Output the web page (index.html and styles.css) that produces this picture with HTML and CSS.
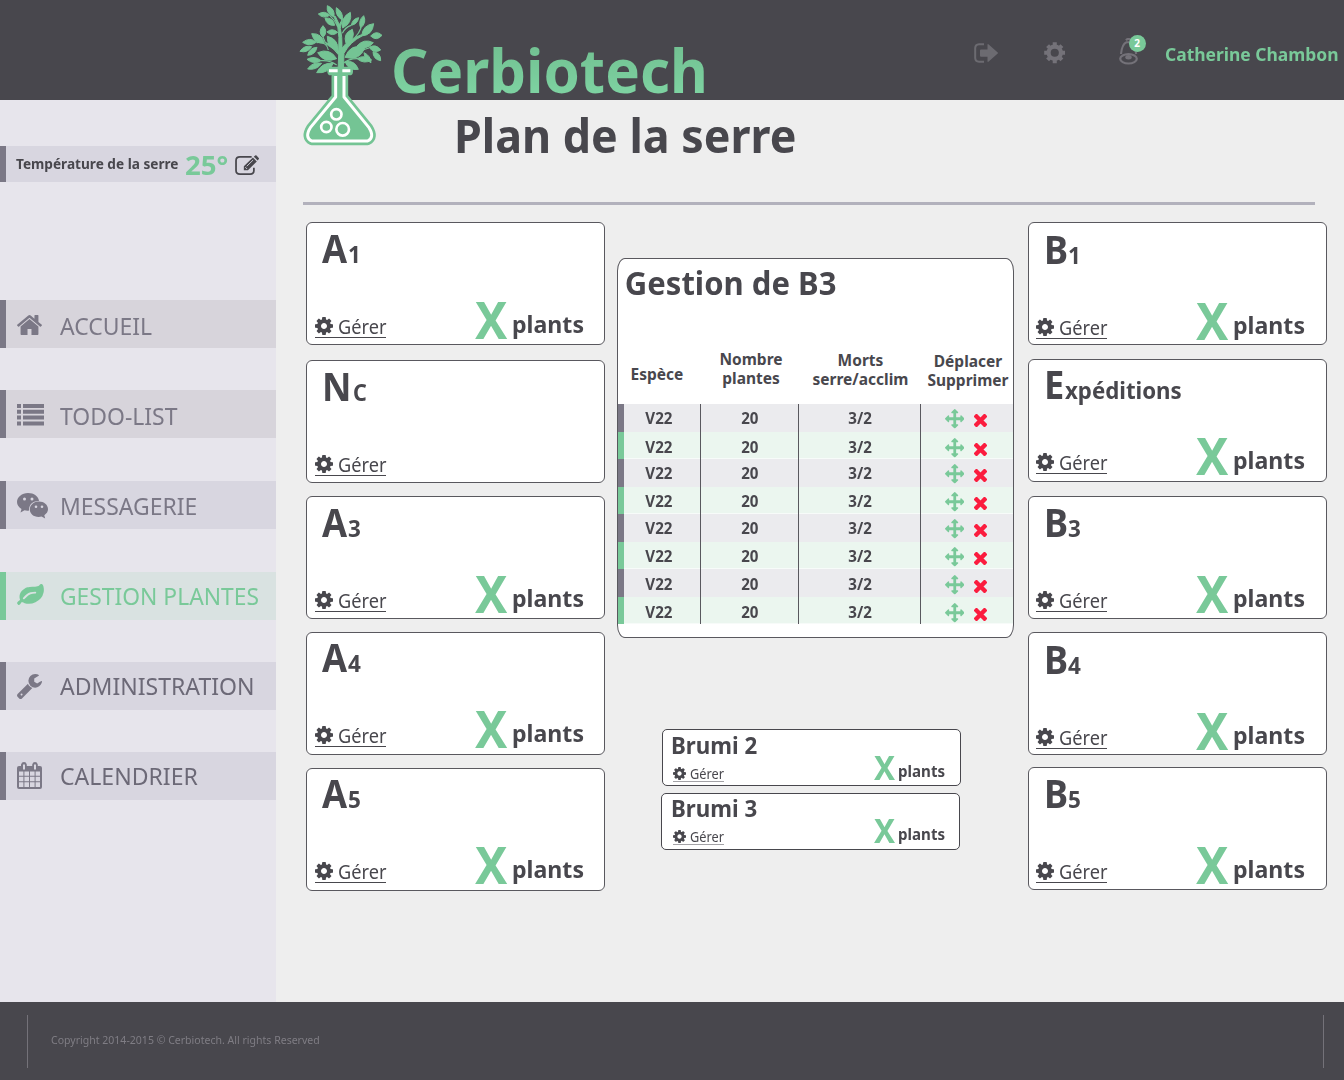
FILE: index.html
```html
<!DOCTYPE html>
<html lang="fr">
<head>
<meta charset="utf-8">
<title>Cerbiotech - Plan de la serre</title>
<link rel="stylesheet" href="styles.css">
</head>
<body>
<svg class="defs" aria-hidden="true">
  <symbol id="cog" viewBox="128 128 1536 1536"><path d="M1152 896q0-106-75-181t-181-75-181 75-75 181 75 181 181 75 181-75 75-181zm512-109v222q0 12-8 23t-20 13l-185 28q-19 54-39 91 35 50 107 138 10 12 10 25t-9 23q-27 37-99 108t-94 71q-12 0-26-9l-138-108q-44 23-91 38-16 136-29 186-7 28-36 28h-222q-14 0-24.500-8.500t-11.500-21.500l-28-184q-49-16-90-37l-141 107q-10 9-25 9-14 0-25-11-126-114-165-168-7-10-7-23 0-12 8-23 15-21 51-66.500t54-70.500q-27-50-41-99l-183-27q-13-2-21-12.500t-8-23.500v-222q0-12 8-23t19-13l186-28q14-46 39-92-40-57-107-138-10-12-10-24 0-10 9-23 26-36 98.500-107.500t94.500-71.500q13 0 26 10l138 107q44-23 91-38 16-136 29-186 7-28 36-28h222q14 0 24.500 8.500t11.500 21.500l28 184q49 16 90 37l142-107q9-9 24-9 13 0 25 10 129 119 165 170 7 8 7 22 0 12-8 23-15 21-51 66.500t-54 70.500q26 50 41 98l183 28q13 2 21 12.500t8 23.500z"/></symbol>
  <symbol id="move" viewBox="0 0 1792 1792"><path d="M1792 896q0 26-19 45l-256 256q-19 19-45 19t-45-19-19-45v-128h-384v384h128q26 0 45 19t19 45-19 45l-256 256q-19 19-45 19t-45-19l-256-256q-19-19-19-45t19-45 45-19h128v-384h-384v128q0 26-19 45t-45 19-45-19l-256-256q-19-19-19-45t19-45l256-256q19-19 45-19t45 19 19 45v128h384v-384h-128q-26 0-45-19t-19-45 19-45l256-256q19-19 45-19t45 19l256 256q19 19 19 45t-19 45-45 19h-128v384h384v-128q0-26 19-45t45-19 45 19l256 256q19 19 19 45z"/></symbol>
  <symbol id="cross" viewBox="0 0 13 13"><path d="M2.500 2.500l8 8M10.500 2.500l-8 8" stroke="currentColor" stroke-width="4.400" stroke-linecap="square"/></symbol>
</svg>

<header class="topbar">
  <svg class="logo" viewBox="0 0 285 450" aria-hidden="true">
    <g class="leaf leaves">
      <path d="M97 17Q121 26 117 51Q93 42 97 17zM124 23Q146 36 142 60Q120 48 124 23zM70 42Q85 58 104 46Q89 30 70 42zM90 54Q115 52 119 76Q95 78 90 54zM166 37Q173 69 143 84Q137 51 166 37zM191 53Q188 72 169 76Q172 56 191 53zM206 47Q216 68 197 84Q188 62 206 47zM236 71Q233 105 200 108Q203 75 236 71zM261 106Q244 125 227 108Q244 89 261 106z"/>
      <path d="M84 77Q101 95 84 112Q67 95 84 77zM50 101Q81 99 88 130Q57 131 50 101zM96 96Q112 111 128 97Q112 82 96 96zM97 109Q131 117 129 152Q95 143 97 109zM172 88Q183 118 153 130Q143 100 172 88zM23 127Q44 142 65 126Q44 110 23 127zM15 154Q38 160 50 140Q28 134 15 154zM38 166Q61 165 66 142Q43 143 38 166z"/>
      <path d="M235 128Q215 152 186 138Q207 114 235 128zM257 150Q237 162 222 142Q243 130 257 150zM257 182Q258 158 234 155Q234 178 257 182zM210 142Q194 185 150 172Q166 129 210 142zM68 158Q88 192 125 176Q104 142 68 158zM36 178Q56 195 78 182Q58 165 36 178zM38 207Q65 212 80 190Q53 184 38 207zM65 218Q100 222 115 190Q80 186 65 218zM230 180Q207 194 186 176Q209 162 230 180zM190 208Q161 213 150 185Q179 179 190 208zM207 158Q227 167 228 188Q209 180 207 158z"/>
      <path d="M129 215L131 165Q118 145 93 132L94 128Q120 137 131 152Q134 110 128 78L117 50L121 49L133 74L142 58L136 85Q142 110 141 145Q158 118 200 104L201 108Q165 126 147 160L145 215z"/>
    </g>
    <path class="twig" d="M65 128Q95 124 100 150M78 182Q105 180 125 195M186 176Q160 176 145 190M222 144Q200 150 190 160M198 84Q192 100 180 112M104 46Q120 60 128 80M84 112L92 130M168 76Q150 82 142 100"/>
    <rect class="leaf" x="97" y="200" width="77" height="26" rx="11"/>
    <path class="glass-edge" d="M122 228V291L46 383Q28 412 50 423H218Q240 412 222 383L147 291V228z"/>
    <path class="glass" d="M122 228V291L46 383Q28 412 50 423H218Q240 412 222 383L147 291V228M102 212H128M142 212H166"/>
    <g class="bubbles"><circle cx="124" cy="343" r="15.500"/><circle cx="94" cy="381" r="15.500"/><circle cx="143" cy="388" r="19"/></g>
  </svg>
  <div class="brand">Cerbiotech</div>
  <nav class="tools">
    <svg class="t-exit" viewBox="0 0 24 20"><path d="M10 1.200H5A4 4 0 0 0 1.200 5V15A4 4 0 0 0 5 18.800H10" fill="none" stroke="currentColor" stroke-width="2"/><path d="M7 6.500q-1 0-1 1v5.200q0 1 1 1h6.500v4.300q0 1.500 1.200.6l9-8q.6-.6 0-1.200l-9-8q-1.200-.9-1.200.6v4.500z"/></svg>
    <svg class="t-cog" viewBox="-10.500 -10.500 21 21"><circle r="6" fill="none" stroke="currentColor" stroke-width="4"/><path d="M0-10.300V-7M0 10.300V7M-10.300 0H-7M10.300 0H7M-7-7L-5-5M7 7L5 5M7-7L5-5M-7 7L-5 5" stroke="currentColor" stroke-width="4"/></svg>
    <div class="bell">
      <svg viewBox="0 0 20 27"><g fill="none" stroke="currentColor"><ellipse cx="9.500" cy="20.800" rx="8.300" ry="4.700" stroke-width="2.200"/><path d="M2 16Q3 6 7.500 4.200H11Q16 6 17.200 16" stroke-width="2.100"/><path d="M7 2.300Q9.500-.5 12 2.300" stroke-width="2.200"/></g><ellipse cx="9.500" cy="19.300" rx="3.200" ry="2.200"/></svg>
      <span class="badge">2</span>
    </div>
    <div class="user">Catherine Chambon</div>
  </nav>
</header>

<div class="body">
  <aside class="side">
    <div class="temp">
      <span class="temp-label">Température de la serre</span>
      <span class="temp-value">25°</span>
      <svg class="edit" viewBox="0 0 25 21"><path d="M17 1.800H5Q1 1.800 1 5.600V15.800Q1 19.500 5 19.500H15.500Q19.300 19.500 19.300 15.800V13" fill="none" stroke="currentColor" stroke-width="1.800"/><path d="M9 15.700V11.400L18.300 2.600L22.300 6.600L13.200 15.700zM19.200 1.700L20.600.5Q21.300 0 22 .6L24.300 3Q24.900 3.700 24.200 4.400L23.100 5.600z"/><path d="M12 11.500L18.500 5.200M10.500 12.500L12.300 14.300" stroke="#d8d6e0" stroke-width=".9"/></svg>
    </div>
    <ul class="menu">
      <li class="item warm"><svg viewBox="89 253 1614 1283" width="25" height="20"><path d="M1472 992v480q0 26-19 45t-45 19h-384v-384h-256v384h-384q-26 0-45-19t-19-45v-480q0-1 .5-3t.5-3l575-474 575 474q1 2 1 6zm223-69l-62 74q-8 9-21 11h-3q-13 0-21-7l-692-577-692 577q-12 8-24 7-13-2-21-11l-62-74q-8-10-7-23.500t11-21.500l719-599q32-26 76-26t76 26l244 204v-195q0-14 9-23t23-9h192q14 0 23 9t9 23v408l219 182q10 8 11 21.500t-7 23.500z"/></svg><span>ACCUEIL</span></li>
      <li class="item warm"><svg viewBox="0 0 27 22" width="27" height="22"><path d="M0 0h4v4H0zM6 0h21v4H6zM0 5.800h4v4H0zM6 5.800h21v4H6zM0 11.600h4v4H0zM6 11.600h21v4H6zM0 17.400h4v4H0zM6 17.400h21v4H6z"/></svg><span>TODO-LIST</span></li>
      <li class="item up"><svg viewBox="0 0 31 26" width="31" height="26"><path d="M11 0C17 0 21.500 3.500 22 8C16 8 11.700 11.500 12 17.500Q10 18 7.500 17.200L3.500 19.500L4.500 16C1.500 14.200 0 11.500 0 9C0 4 5 0 11 0z"/><path d="M22 8.600C27 8.600 31 12 31 16.200Q31 19.500 27.300 22.200L28.200 25.500L24.500 23.600C17.500 25 12.800 21 12.800 16.400C12.800 12 17 8.600 22 8.600z"/><g fill="#d8d6e0"><circle cx="7.500" cy="6" r="1.500"/><circle cx="15" cy="6" r="1.500"/><circle cx="19" cy="13.800" r="1.300"/><circle cx="25" cy="13.800" r="1.300"/></g></svg><span>MESSAGERIE</span></li>
      <li class="item active up2"><svg viewBox="0 128 1792 1408" width="27" height="21"><path d="M1280 704q0-26-19-45t-45-19q-172 0-318 49.500t-259.500 134-235.500 219.500q-19 21-19 45 0 26 19 45t45 19q24 0 45-19 27-24 74-71t67-66q137-124 268.500-176t313.500-52q26 0 45-19t19-45zm512-198q0 95-20 193-46 224-184.500 383t-357.500 268q-214 108-438 108-148 0-286-47-15-5-88-42t-96-37q-16 0-39.500 32t-45 70-52.500 70-60 32q-43 0-63.500-17.500t-45.500-59.500q-2-4-6-11t-5.500-10-3-9.500-1.500-13.500q0-35 31-73.500t68-65.500 68-56 31-48q0-4-14-38t-16-44q-9-51-9-104 0-115 43.500-220t119-184.500 170.500-139 204-95.500q55-18 145-25.500t179.500-9 178.500-6 163.500-24 113.500-56.500l29.500-29.500 29.500-28 27-20 36.500-16 43.500-4.500q39 0 70.500 46t47.500 112 24 124 8 96z"/></svg><span>GESTION PLANTES</span></li>
      <li class="item dark up2"><svg viewBox="85 128 1641 1643" width="25" height="25"><path d="M448 1472q0-26-19-45t-45-19-45 19-19 45 19 45 45 19 45-19 19-45zm644-420l-682 682q-37 37-90 37-52 0-91-37l-106-108q-38-36-38-90 0-53 38-91l681-681q39 98 114.500 173.500t173.500 114.500zm634-435q0 39-23 106-47 134-164.500 217.500t-258.500 83.500q-185 0-316.500-131.500t-131.500-316.500 131.500-316.500 316.500-131.500q58 0 121.500 16.500t107.500 46.500q16 11 16 28t-16 28l-293 169v224l193 107q5-3 79-48.500t135.500-81 70.500-35.500q15 0 23.500 10t8.500 25z"/></svg><span>ADMINISTRATION</span></li>
      <li class="item dark up2"><svg class="cal" viewBox="0 0 25 27" width="25" height="27"><path fill-rule="evenodd" d="M2 4H4V2.500Q4.500 0 7 0T9.800 2.500V4H15.200V2.500Q15.600 0 18 0T20.800 2.500V4H23Q25 4 25 6V25Q25 27 23 27H2Q0 27 0 25V6Q0 4 2 4zM6 2.500V7.500H8V2.500zM17 2.500V7.500H19V2.500zM2 9.500V13.800H6.400V9.500zM7.400 9.500V13.800H12V9.500zM13 9.500V13.800H17.600V9.500zM18.600 9.500V13.800H23V9.500zM2 14.800V19.200H6.400V14.800zM7.400 14.800V19.200H12V14.800zM13 14.800V19.200H17.600V14.800zM18.600 14.800V19.200H23V14.800zM2 20.200V25H6.400V20.200zM7.400 20.200V25H12V20.200zM13 20.200V25H17.600V20.200zM18.600 20.200V25H23V20.200z"/></svg><span>CALENDRIER</span></li>
    </ul>
  </aside>

  <main class="main">
    <div class="heading"><h1>Plan de la serre</h1></div>
    <div class="plan">
      <section class="col col-a">
        <article class="card"><h2><b class="w-a">A</b><small>1</small></h2><div class="row"><a class="manage"><svg><use href="#cog"/></svg><span>Gérer</span></a><b class="x">X</b><span class="plants">plants</span></div></article>
        <article class="card"><h2><b class="w-n">N</b><small class="w-c">C</small></h2><div class="row"><a class="manage"><svg><use href="#cog"/></svg><span>Gérer</span></a></div></article>
        <article class="card"><h2><b class="w-a">A</b><small>3</small></h2><div class="row"><a class="manage"><svg><use href="#cog"/></svg><span>Gérer</span></a><b class="x">X</b><span class="plants">plants</span></div></article>
        <article class="card high"><h2><b class="w-a">A</b><small>4</small></h2><div class="row"><a class="manage"><svg><use href="#cog"/></svg><span>Gérer</span></a><b class="x">X</b><span class="plants">plants</span></div></article>
        <article class="card high"><h2><b class="w-a">A</b><small>5</small></h2><div class="row"><a class="manage"><svg><use href="#cog"/></svg><span>Gérer</span></a><b class="x">X</b><span class="plants">plants</span></div></article>
      </section>

      <section class="mid">
        <div class="panel">
          <h2 class="panel-title">Gestion de B3</h2>
          <div class="grid head">
            <div class="h1l"><span>Espèce</span></div>
            <div class="h2l"><span>Nombre<br>plantes</span></div>
            <div class="h3l"><span>Morts<br>serre/acclim</span></div>
            <div class="h4l"><span>Déplacer<br>Supprimer</span></div>
          </div>
          <div class="rows">
            <div class="grid line"><div><span>V22</span></div><div><span>20</span></div><div><span>3/2</span></div><div class="acts"><svg class="mv"><use href="#move"/></svg><svg class="rm"><use href="#cross"/></svg></div></div>
            <div class="grid line s15"><div><span>V22</span></div><div><span>20</span></div><div><span>3/2</span></div><div class="acts"><svg class="mv"><use href="#move"/></svg><svg class="rm"><use href="#cross"/></svg></div></div>
            <div class="grid line"><div><span>V22</span></div><div><span>20</span></div><div><span>3/2</span></div><div class="acts"><svg class="mv"><use href="#move"/></svg><svg class="rm"><use href="#cross"/></svg></div></div>
            <div class="grid line s05"><div><span>V22</span></div><div><span>20</span></div><div><span>3/2</span></div><div class="acts"><svg class="mv"><use href="#move"/></svg><svg class="rm"><use href="#cross"/></svg></div></div>
            <div class="grid line"><div><span>V22</span></div><div><span>20</span></div><div><span>3/2</span></div><div class="acts"><svg class="mv"><use href="#move"/></svg><svg class="rm"><use href="#cross"/></svg></div></div>
            <div class="grid line s05"><div><span>V22</span></div><div><span>20</span></div><div><span>3/2</span></div><div class="acts"><svg class="mv"><use href="#move"/></svg><svg class="rm"><use href="#cross"/></svg></div></div>
            <div class="grid line s10"><div><span>V22</span></div><div><span>20</span></div><div><span>3/2</span></div><div class="acts"><svg class="mv"><use href="#move"/></svg><svg class="rm"><use href="#cross"/></svg></div></div>
            <div class="grid line s15"><div><span>V22</span></div><div><span>20</span></div><div><span>3/2</span></div><div class="acts"><svg class="mv"><use href="#move"/></svg><svg class="rm"><use href="#cross"/></svg></div></div>
          </div>
        </div>
        <div class="brumis">
          <article class="mini"><div class="mini-left"><h3>Brumi 2</h3><a class="manage"><svg><use href="#cog"/></svg><span>Gérer</span></a></div><b class="x">X</b><span class="plants">plants</span></article>
          <article class="mini second"><div class="mini-left"><h3>Brumi 3</h3><a class="manage"><svg><use href="#cog"/></svg><span>Gérer</span></a></div><b class="x">X</b><span class="plants">plants</span></article>
        </div>
      </section>

      <section class="col col-b">
        <article class="card low"><h2><b class="w-b">B</b><small>1</small></h2><div class="row"><a class="manage"><svg><use href="#cog"/></svg><span>Gérer</span></a><b class="x">X</b><span class="plants">plants</span></div></article>
        <article class="card high"><h2><b class="w-e">E</b><small class="w-x">xpéditions</small></h2><div class="row"><a class="manage"><svg><use href="#cog"/></svg><span>Gérer</span></a><b class="x">X</b><span class="plants">plants</span></div></article>
        <article class="card"><h2><b class="w-b">B</b><small>3</small></h2><div class="row"><a class="manage"><svg><use href="#cog"/></svg><span>Gérer</span></a><b class="x">X</b><span class="plants">plants</span></div></article>
        <article class="card low"><h2><b class="w-b">B</b><small>4</small></h2><div class="row"><a class="manage"><svg><use href="#cog"/></svg><span>Gérer</span></a><b class="x">X</b><span class="plants">plants</span></div></article>
        <article class="card"><h2><b class="w-b">B</b><small>5</small></h2><div class="row"><a class="manage"><svg><use href="#cog"/></svg><span>Gérer</span></a><b class="x">X</b><span class="plants">plants</span></div></article>
      </section>
    </div>
  </main>
</div>

<footer class="footer"><div class="legal"><span>Copyright 2014-2015 © Cerbiotech. All rights Reserved</span></div></footer>
</body>
</html>
```
FILE: styles.css
```css
* { box-sizing: border-box; margin: 0; padding: 0; }
body {
  width: 1344px;
  height: 1080px;
  overflow: hidden;
  font-family: "Noto Sans", "Open Sans", sans-serif;
  color: #48474d;
  background: #eee;
  display: flex;
  flex-direction: column;
}
svg { display: block; fill: currentColor; flex: none; }
.defs { position: absolute; width: 0; height: 0; }
h1, h2, h3, b { font-weight: 700; }

/* Top bar */
.topbar {
  position: relative;
  z-index: 1;
  flex: none;
  height: 100px;
  background: #48474d;
  display: flex;
  padding-left: 390.5px;
}
.logo { position: absolute; left: 295px; top: 0; width: 95px; height: 150px; }
.leaf { fill: #74c494; }
.leaves { stroke: #74c494; stroke-width: 3; stroke-linejoin: round; }
.twig { fill: none; stroke: #74c494; stroke-width: 3.5; }
.glass-edge { fill: #74c494; stroke: #74c494; stroke-width: 25; stroke-linejoin: round; }
.glass { fill: none; stroke: #fff; stroke-width: 9; stroke-linejoin: round; }
.bubbles { fill: none; stroke: #fff; stroke-width: 8; }
.brand {
  width: 336px;
  flex: none;
  margin-top: 35px;
  height: 70px;
  font: 700 61px/70px "Noto Sans", sans-serif;
  color: transparent;
  background: linear-gradient(#73c293 15px, #7ed3a2 60px);
  -webkit-background-clip: text;
  background-clip: text;
  white-space: nowrap;
  transform: scaleX(.955);
  transform-origin: 0 0;
}
.tools { display: flex; flex: none; margin-left: 247.500px; color: #7b7886; }
.t-exit { width: 24px; height: 20px; margin-top: 43px; color: #6c6b71; }
.t-cog { width: 21.500px; height: 21.500px; margin: 42px 53.500px 0 45.500px; color: #747279; }
.bell { position: relative; width: 20px; height: 27px; margin-top: 38px; color: #747279; }
.bell svg { width: 20px; height: 27px; }
.badge {
  position: absolute;
  left: 10px;
  top: -3px;
  width: 17px;
  height: 17px;
  border-radius: 50%;
  background: #79c999;
  color: #fff;
  font-size: 10px;
  font-weight: 700;
  line-height: 17px;
  text-align: center;
}
.user {
  width: 178px;
  margin: 42px 0 0 26px;
  color: #79c999;
  font-weight: 700;
  font-size: 17.5px;
  line-height: 24px;
  white-space: nowrap;
  transform: scaleX(.997);
  transform-origin: 0 0;
}

/* Sidebar */
.body { display: flex; flex: none; height: 902px; }
.side {
  width: 276px;
  flex: none;
  background: #e7e5ec;
  padding-top: 46px;
}
.temp {
  display: flex;
  height: 36px;
  padding-left: 10px;
  background: #d8d6e0;
  border-left: 6px solid #7b7886;
}
.temp-label {
  width: 168.500px;
  font-size: 13.3px;
  font-weight: 700;
  line-height: 37px;
  white-space: nowrap;
  transform: scaleX(1.025);
  transform-origin: 0 0;
}
.temp-value {
  width: 50.500px;
  font-size: 27.3px;
  font-weight: 700;
  line-height: 38px;
  color: #79c999;
  transform: scaleX(1.01);
  transform-origin: 0 0;
}
.edit { width: 24.500px; height: 20.500px; margin-top: 9px; }
.menu { list-style: none; margin-top: 118px; }
.item {
  height: 48px;
  margin-bottom: 42px;
  display: flex;
  align-items: center;
  padding: 3px 0 0 11px;
  background: #d8d6e0;
  border-left: 6px solid #7b7886;
  color: #7b7886;
}
.item.warm { background: #d7d4db; }
.item.warm + .item.up { margin-top: 43px; }
.item.up { padding-top: 1px; margin-bottom: 43px; }
.item.up2 { padding-top: 0; }
.item span {
  flex: none;
  font-size: 24px;
  line-height: 32px;
  white-space: nowrap;
  transform: scaleX(.956);
  transform-origin: 0 0;
}
.item.active { background: #d9e2e1; border-color: #79c999; color: #79c999; }
.item.active span { transform: scaleX(.951); }
.item svg { margin-right: 16px; }
.item.active svg { margin-top: -3px; }
.item svg[width="25"] { margin-right: 18px; }
.item svg[width="31"] { margin-right: 12px; }
.item .cal { margin-top: -2px; }
.item.warm svg[width="25"] { margin-top: -1px; }
.item.warm svg[width="27"] { margin-top: -2px; }
.item.dark span { color: #6c6977; transform: scaleX(.96); }

/* Main */
.main { width: 1068px; }
.heading {
  width: 1012px;
  height: 105px;
  margin-left: 27px;
  border-bottom: 3px solid #b2b1bc;
}
h1 {
  width: 400px;
  padding-top: 5px;
  margin-left: 151px;
  font-size: 46px;
  line-height: 60px;
  white-space: nowrap;
  transform: scaleX(.974);
  transform-origin: 0 0;
}
.plan { display: flex; margin: 17px 0 0 30px; }
.col { width: 299px; flex: none; }
.card {
  --dy: 0px;
  height: 123px;
  margin-bottom: 13px;
  padding-top: var(--dy);
  background: #fff;
  border: 1px solid #59585e;
  border-radius: 6px;
}
.card.low { --dy: 1px; }
.card.high h2 { margin-top: -1px; }
.col-a .card:first-child { margin-bottom: 15px; }
.col-b .card:nth-child(-n+2) { margin-bottom: 14px; }
.col-b .card:nth-child(4) { margin-bottom: 12px; }
.card h2 { display: flex; align-items: baseline; height: 50px; padding-left: 15px; }
.card h2 b { font-size: 39px; line-height: 50px; transform: scaleX(.93); transform-origin: 0 0; }
.card small {
  font-size: 23.4px;
  font-weight: 700;
  line-height: 30px;
  transform: scaleX(.96);
  transform-origin: 0 0;
}
.w-a { width: 25.500px; }
.w-n { width: 30.500px; }
.w-b { width: 23.500px; }
.w-e { width: 21px; }
.card .w-c { transform: scaleX(.92); }
.card .w-x { transform: scaleX(.951); }
.row { display: flex; margin-top: 16px; padding-left: 8px; height: 55px; }
.manage {
  display: flex;
  align-items: flex-start;
  flex: none;
  width: 71px;
  height: 24px;
  margin-top: 25px;
  border-bottom: 1px solid #48474d;
}
.manage svg { width: 18px; height: 18px; margin: 2.5px 4.5px 0 0; }
.manage span {
  font-size: 20px;
  line-height: 26px;
  transform: scaleX(.91);
  transform-origin: 0 0;
}
.x { color: #79c999; transform-origin: 0 0; }
.card .x {
  width: 37.500px;
  margin-left: 88.500px;
  font-size: 52px;
  line-height: 60px;
  transform: scaleX(.93);
}
.card .plants {
  margin-top: 20px;
  font-size: 23px;
  font-weight: 700;
  line-height: 30px;
  transform: scaleX(1.005);
  transform-origin: 0 0;
}
.col-b .row { padding-left: 7px; }

/* Central column */
.mid { width: 397px; flex: none; margin: 36px 14px 0 12px; }
.panel {
  height: 380px;
  background: #fff;
  border: 1px solid #59585e;
  border-radius: 8px / 13px;
  overflow: hidden;
}
.panel-title {
  height: 82px;
  padding: 3px 0 0 7px;
  font-size: 32px;
  line-height: 42px;
  white-space: nowrap;
  transform: scaleX(.97);
  transform-origin: 0 0;
}
.grid { display: grid; grid-template-columns: 83px 98px 122px 92px; text-align: center; }
.grid span { display: inline-block; }
.head { height: 63px; font-size: 15.5px; font-weight: 700; line-height: 19px; }
.h1l { padding: 24px 0 0 0; margin-left: -5px; }
.h2l { padding: 9px 0 0 2px; }
.h3l { padding: 10px 0 0 1px; }
.h4l { padding: 11px 0 0 2px; }
.line {
  height: 27.5px;
  background: #ebebee;
  font-size: 15.5px;
  font-weight: 700;
  line-height: 29px;
  box-shadow: inset 6px 0 #7b7886;
}
.line:nth-child(even) { background: #ebf6ef; box-shadow: inset 6px 0 #79c999, inset 0 -1px #f7fbf9; }
.line > div { height: 27.5px; border-right: 1px solid #59585e; padding-top: var(--s, 0px); }
.line > div:last-child { border: 0; }
.line > div:nth-child(3) { padding-left: 2px; }
.line span { transform: scaleX(.975); }
.s05 { --s: .5px; }
.s10 { --s: 1px; }
.s15 { --s: 1.5px; }
.acts { display: flex; align-items: flex-start; }
.mv { width: 19.500px; height: 19.500px; margin: 5px 9.500px 0 23.500px; color: #79c999; }
.rm { width: 13px; height: 13px; margin-top: 9.500px; color: #fb1c3e; }

/* Brumi cards */
.brumis { margin: 91px 0 0 44px; }
.mini {
  display: flex;
  width: 299px;
  height: 57px;
  margin: 0 0 7px 1px;
  background: #fff;
  border: 1px solid #48474d;
  border-radius: 5px;
}
.mini.second { margin-left: 0; padding-left: 1px; }
.mini.second > * { position: relative; top: -1px; }
.mini-left { width: 211px; padding-left: 8px; flex: none; }
.mini h3 {
  height: 33px;
  font-size: 23px;
  line-height: 30px;
  white-space: nowrap;
  transform: scaleX(.97);
  transform-origin: 0 0;
}
.mini .manage { width: 51px; height: 18px; margin: 1px 0 0 2px; border-color: #a3a2a6; }
.mini .manage svg { width: 13px; height: 13px; margin: 3px 3.5px 0 0; }
.mini .manage span { font-size: 14px; line-height: 19px; }
.mini .x { width: 24px; font-size: 33.5px; line-height: 40px; margin-top: 17px; transform: scaleX(.94); }
.mini .plants {
  font-size: 15.5px;
  font-weight: 700;
  line-height: 20px;
  margin-top: 31px;
  transform: scaleX(.975);
  transform-origin: 0 0;
}

/* Footer */
.footer { flex: none; height: 78px; padding: 13px 20px 0 27px; background: #48474d; }
.legal {
  height: 53px;
  border: solid #747279;
  border-width: 0 1px;
  padding: 14px 0 0 23px;
  color: #7f7d84;
  font-size: 11px;
  line-height: 22px;
}
.legal span { display: inline-block; transform: scaleX(.958); transform-origin: 0 0; }
```
